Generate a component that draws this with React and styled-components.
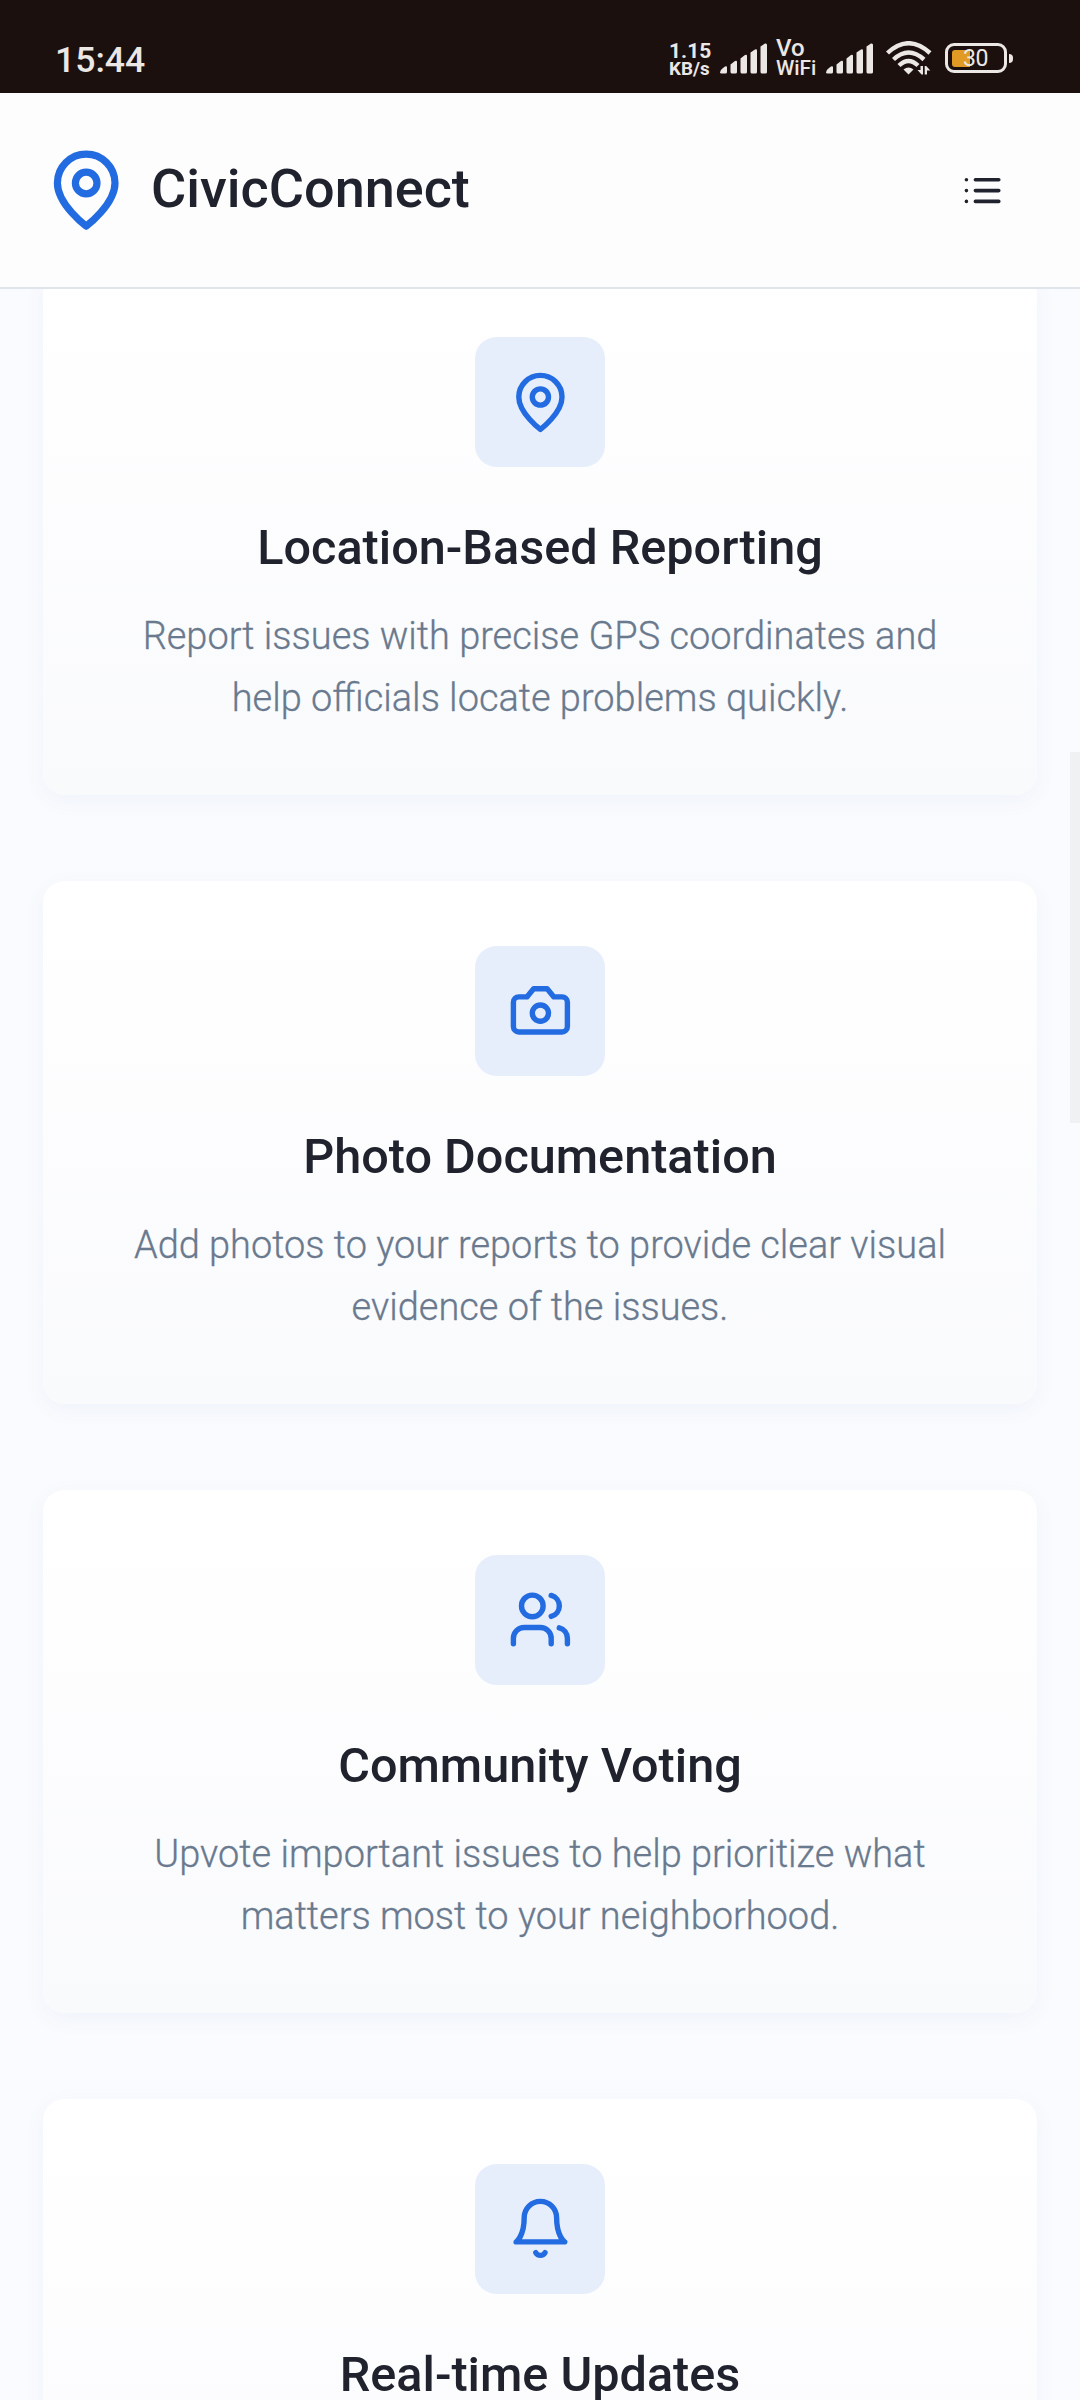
import React from 'react'
import styled, { createGlobalStyle } from 'styled-components';

const brandPrimary = '#226be1';
const textDark = '#20232d';
const textMuted = '#69798e';
const statusInk = '#ebe7e5';

const GlobalStyle = createGlobalStyle`
  * {
    box-sizing: border-box;
  }

  body {
    margin: 0;
    background-color: #fafbfe;
    font-family: Roboto, "Liberation Sans", sans-serif;
    color: ${textDark};
  }
`;

const Screen = styled.div`
  position: relative;
  width: 1080px;
  height: 2400px;
  overflow: hidden;
  background-color: #fafbfe;
`;

const StatusBar = styled.div`
  display: flex;
  align-items: center;
  justify-content: space-between;
  height: 93px;
  padding: 23px 68px 0 55px;
  background-color: #1b100e;
  color: ${statusInk};
`;

const Clock = styled.span`
  font-size: 35.6px;
  font-weight: 500;
  line-height: 44px;
  margin-top: 4px;
`;

const StatusIcons = styled.div`
  display: flex;
  align-items: center;
  height: 46px;
`;

const NetSpeeds = styled.div`
  width: 51px;
  padding-top: 4px;
`;

const NetSpeed = styled.div`
  font-size: ${({size}) => size}px;
  font-weight: 700;
  line-height: 18.5px;
`;

const VoWifi = styled.div`
  width: 50px;
  font-size: 20.8px;
  font-weight: 500;
  line-height: 20.5px;
`;

const VoLine = styled.div`
  font-size: 24px;
`;

const SignalIcon = styled.svg`
  width: 47px;
  height: 31px;
  margin-right: ${({gap}) => gap}px;
  fill: ${statusInk};
`;

const WifiIcon = styled.svg`
  width: 46px;
  height: 34px;
  margin-right: 13px;
`;

const Battery = styled.div`
  position: relative;
  display: flex;
  align-items: center;
  width: 62px;
  height: 30px;
  padding: 0 4px;
  border: 3px solid ${statusInk};
  border-radius: 9px;
  margin-right: 5px;

  &::after {
    content: '';
    position: absolute;
    right: -9px;
    top: 8px;
    width: 4px;
    height: 9px;
    border-radius: 0 4px 4px 0;
    background-color: ${statusInk};
  }
`;

const BatteryFill = styled.div`
  width: 18px;
  height: 17px;
  border-radius: 3px 0 0 3px;
  background-color: #e19b25;
`;

const BatteryLevel = styled.span`
  margin: 2px 0 0 -7px;
  z-index: 1;
  font-size: 23px;
  line-height: 24px;
  letter-spacing: -0.5px;
`;

const Header = styled.header`
  position: relative;
  z-index: 2;
  display: flex;
  align-items: center;
  justify-content: space-between;
  height: 196px;
  padding: 0 43px;
  background-color: rgba(253, 253, 253, 0.95);
  border-bottom: 2px solid #dfe5eb;
`;

const Brand = styled.div`
  display: flex;
  align-items: center;
  gap: 21.6px;
  font-size: 54px;
  font-weight: 500;
  line-height: 75px;
`;

const BrandName = styled.span`
  margin-top: -2px;
`;

const MenuButton = styled.button`
  display: flex;
  align-items: center;
  justify-content: center;
  width: 108px;
  height: 108px;
  padding: 1px 0 0;
  border: 0;
  background: none;
  color: ${textDark};
`;

const Icon = styled.svg`
  display: block;
  width: ${({size}) => size}px;
  height: ${({size}) => size}px;
  fill: none;
  stroke: currentColor;
  stroke-width: 2;
  stroke-linecap: round;
  stroke-linejoin: round;
`;

const LogoIcon = styled(Icon)`
  color: ${brandPrimary};
`;

// first card is scrolled partly under the header
const Features = styled.main`
  display: flex;
  flex-direction: column;
  gap: 86px;
  margin-top: -17px;
  padding: 0 43px;
`;

const Card = styled.section`
  display: flex;
  flex-direction: column;
  align-items: center;
  height: 522.9px;
  flex-shrink: 0;
  padding: 65px;
  border-radius: 21.6px;
  background-image: linear-gradient(180deg, #ffffff, #f9fafc);
  box-shadow: 0 5.4px 21.6px rgba(34, 107, 200, 0.05);
  text-align: center;
`;

const IconTile = styled.div`
  display: flex;
  align-items: center;
  justify-content: center;
  width: 130px;
  height: 130px;
  flex-shrink: 0;
  border-radius: 21.6px;
  background-color: #e6eefb;
  color: ${brandPrimary};
`;

const CardTitle = styled.h3`
  margin: 43.2px 0 20.5px;
  font-size: 48.6px;
  font-weight: 500;
  line-height: 75.6px;
  white-space: nowrap;
`;

const CardText = styled.p`
  margin: 0;
  color: ${textMuted};
  font-size: 37.95px;
  font-weight: 300;
  line-height: 61.6px;
  -webkit-text-stroke: 0.3px ${textMuted};
  white-space: nowrap;
`;

const ScrollThumb = styled.div`
  position: absolute;
  right: 0;
  top: 752px;
  width: 10px;
  height: 371px;
  background-color: #f0f1f3;
`;

const PinPaths = () => <>
  <path d="M20 10c0 6-8 12-8 12s-8-6-8-12a8 8 0 0 1 16 0Z" />
  <circle cx="12" cy="10" r="3" />
</>

const CameraPaths = () => <>
  <path d="M14.5 4h-5L7 7H4a2 2 0 0 0-2 2v9a2 2 0 0 0 2 2h16a2 2 0 0 0 2-2V9a2 2 0 0 0-2-2h-3l-2.5-3z" />
  <circle cx="12" cy="13" r="3" />
</>

const UsersPaths = () => <>
  <path d="M16 21v-2a4 4 0 0 0-4-4H6a4 4 0 0 0-4 4v2" />
  <circle cx="9" cy="7" r="4" />
  <path d="M22 21v-2a4 4 0 0 0-3-3.87" />
  <path d="M16 3.13a4 4 0 0 1 0 7.75" />
</>

const BellPaths = () => <>
  <path d="M6 8a6 6 0 0 1 12 0c0 7 3 9 3 9H3s3-2 3-9" />
  <path d="M10.3 21a1.94 1.94 0 0 0 3.4 0" />
</>

const features = [
  {
    title: 'Location-Based Reporting',
    lines: ['Report issues with precise GPS coordinates and', 'help officials locate problems quickly.'],
    Paths: PinPaths
  },
  {
    title: 'Photo Documentation',
    lines: ['Add photos to your reports to provide clear visual', 'evidence of the issues.'],
    Paths: CameraPaths
  },
  {
    title: 'Community Voting',
    lines: ['Upvote important issues to help prioritize what', 'matters most to your neighborhood.'],
    Paths: UsersPaths
  },
  {
    title: 'Real-time Updates',
    lines: [],
    Paths: BellPaths
  }
];

function Signal({ gap }) {
  return <SignalIcon gap={gap} viewBox="0 0 47 31">
    <path d="M0 29.500 Q0 27 3 25 L5 23.500 Q7 22.500 7 24.500 V29 Q7 30.500 5.500 30.500 H1.500 Q0 30.500 0 29.500Z" />
    <path d="M10.500 21.500 L15 18 Q17 17 17 19 V29 Q17 30.500 15.500 30.500 H12 Q10.500 30.500 10.500 29Z" />
    <path d="M20.500 15.500 L25 12 Q27 11 27 13 V29 Q27 30.500 25.500 30.500 H22 Q20.500 30.500 20.500 29Z" />
    <path d="M30.500 9.500 L35 6.500 Q37 5.500 37 7.500 V29 Q37 30.500 35.500 30.500 H32 Q30.500 30.500 30.500 29Z" />
    <path d="M40.500 3.500 L45 .5 Q47 0 47 2 V29 Q47 30.500 45.500 30.500 H42 Q40.500 30.500 40.500 29Z" />
  </SignalIcon>
}

function Wifi() {
  return <WifiIcon viewBox="0 0 46 34">
    <g fill="none" stroke={statusInk} strokeWidth="4.400">
      <path d="M1.500 12 Q22.500 -7.500 44 12" />
      <path d="M7.500 18.500 Q22.500 4.500 38 18.500" />
      <path d="M13 24.500 Q22.500 15.500 32 24.500" />
    </g>
    <path d="M17.500 28.500 Q22.500 24.500 27.500 28.500 L22.500 33.500Z" fill={statusInk} />
    <path d="M34.500 25 H37 V33.500 H35.500 L31.500 29 H34.500Z" fill={statusInk} />
    <path d="M41 33.500 H38.700 V25 H40.200 L44.300 29.500 H41Z" fill={statusInk} />
  </WifiIcon>
}

const FeatureCard = ({ title, lines, Paths }) => (
  <Card>
    <IconTile>
      <Icon size={64.8} viewBox="0 0 24 24"><Paths /></Icon>
    </IconTile>
    <CardTitle>{title}</CardTitle>
    {lines.map(line => <CardText key={line}>{line}</CardText>)}
  </Card>
)

export default function App() {
  return <>
    <GlobalStyle />
    <Screen>
      <StatusBar>
        <Clock>15:44</Clock>
        <StatusIcons>
          <NetSpeeds>
            <NetSpeed size={21}>1.15</NetSpeed>
            <NetSpeed size={18.8}>KB/s</NetSpeed>
          </NetSpeeds>
          <Signal gap={9} />
          <VoWifi>
            <VoLine>Vo</VoLine>
            <div>WiFi</div>
          </VoWifi>
          <Signal gap={13} />
          <Wifi />
          <Battery>
            <BatteryFill />
            <BatteryLevel>30</BatteryLevel>
          </Battery>
        </StatusIcons>
      </StatusBar>
      <Header>
        <Brand>
          <LogoIcon size={86.4} viewBox="0 0 24 24"><PinPaths /></LogoIcon>
          <BrandName>CivicConnect</BrandName>
        </Brand>
        <MenuButton aria-label="Menu">
          <Icon size={43.2} viewBox="0 0 24 24">
            <path d="M8 6h13M8 12h13M8 18h13M3 6h.01M3 12h.01M3 18h.01" />
          </Icon>
        </MenuButton>
      </Header>
      <Features>
        {features.map(feature => <FeatureCard key={feature.title} {...feature} />)}
      </Features>
      <ScrollThumb />
    </Screen>
  </>
}
